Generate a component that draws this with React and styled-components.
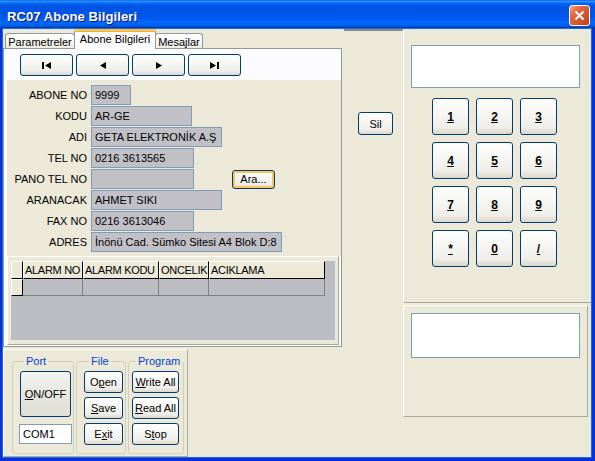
import React from "react";
import styled, { createGlobalStyle, css } from "styled-components";

const GlobalStyle = createGlobalStyle`
  html, body {
    margin: 0;
    padding: 0;
    background: #ece9d8;
  }
  body {
    font-family: "Liberation Sans", Arial, sans-serif;
    font-size: 11px;
    color: #000;
  }
  * {
    box-sizing: border-box;
  }
`;

const Window = styled.div`
  width: 595px;
  height: 461px;
  display: flex;
  flex-direction: column;
  background: #0831d9;
  overflow: hidden;
`;

const TitleBar = styled.div`
  height: 29px;
  flex: none;
  display: flex;
  align-items: center;
  justify-content: space-between;
  padding: 0 5px 0 7px;
  background: linear-gradient(
    180deg,
    #0058ee 0%,
    #3593ff 4%,
    #288eff 6%,
    #127dff 8%,
    #036ffc 10%,
    #0262ee 14%,
    #0057e5 20%,
    #0054e3 24%,
    #0055eb 56%,
    #005bf5 66%,
    #026afe 76%,
    #0062ef 86%,
    #0052d6 92%,
    #0040ab 94%,
    #003092 100%
  );
`;

const Title = styled.span`
  color: #fff;
  font-weight: bold;
  font-size: 13px;
  padding-top: 3px;
  text-shadow: 1px 1px #0a1883;
  letter-spacing: 0.1px;
`;

const CloseButton = styled.div`
  width: 21px;
  height: 21px;
  margin-top: 2px;
  border: 1px solid #fff;
  border-radius: 3px;
  background: linear-gradient(135deg, #f3a58f 0%, #e3683f 30%, #d2502b 70%, #c13c1a 100%);
  display: flex;
  align-items: center;
  justify-content: center;
`;

const Body = styled.div`
  flex: 1;
  display: flex;
  margin: 0 4px 4px 3px;
  background: #ece9d8;
  box-shadow: 0 0 0 1px #166aee;
`;

/* ---------- left column ---------- */

const LeftColumn = styled.div`
  width: 341px;
  flex: none;
  display: flex;
  flex-direction: column;
`;

const TabStrip = styled.div`
  height: 19px;
  display: flex;
  align-items: flex-end;
  padding-left: 2px;
`;

const Tab = styled.div`
  width: ${(p) => p.$w}px;
  height: 15px;
  display: flex;
  align-items: center;
  justify-content: center;
  padding-top: 1px;
  border: 1px solid #919b9c;
  border-bottom: none;
  border-radius: 3px 3px 0 0;
  background: linear-gradient(180deg, #ffffff 0%, #f7f7f4 50%, #ecebe6 100%);
  ${(p) =>
    p.$active &&
    css`
      height: 20px;
      margin-bottom: -1px;
      position: relative;
      z-index: 1;
      align-items: flex-start;
      padding-top: 2px;
      background: #fcfcfe;
      border-top: 2px solid #ffc83c;
      box-shadow: inset 0 1px 0 #f5b040;
      margin-left: -1px;
      margin-right: -1px;
    `}
`;

const TabPage = styled.div`
  width: 339px;
  height: 299px;
  border: 1px solid #919b9c;
  background: #fcfcfe;
  display: flex;
  flex-direction: column;
`;

const NavRow = styled.div`
  display: flex;
  gap: 3px;
  padding: 5px 0 0 16px;
`;

const XpButton = styled.button`
  font-family: inherit;
  font-size: ${(p) => p.$size || 11}px;
  font-weight: ${(p) => (p.$bold ? "bold" : "normal")};
  color: #000;
  width: ${(p) => p.$w}px;
  height: ${(p) => p.$h}px;
  flex: none;
  padding: 0;
  display: flex;
  align-items: center;
  justify-content: center;
  border: 1px solid #003c74;
  border-radius: 3px;
  background: linear-gradient(180deg, #ffffff 0%, #f5f5f1 45%, #efeee9 80%, #dcd7cc 100%);
  ${(p) =>
    p.$focus &&
    css`
      box-shadow: inset 0 0 0 2px #fbc35a;
    `}
  ${(p) =>
    p.$gray &&
    css`
      background: linear-gradient(180deg, #f4f4f0 0%, #e6e6df 50%, #dfdfd7 100%);
    `}
`;

const FieldsPanel = styled.div`
  margin: 4px 0 0 3px;
  height: 176px;
  background: #ece9d8;
  padding-top: 5px;
  display: flex;
  flex-direction: column;
  gap: 1px;
`;

const Row = styled.div`
  display: flex;
  align-items: center;
  height: 20px;
`;

const Label = styled.div`
  width: 81px;
  margin-right: 3px;
  text-align: right;
  padding-right: 1px;
  white-space: nowrap;
`;

const Field = styled.div`
  width: ${(p) => p.$w}px;
  height: 20px;
  border: 1px solid #7f9db9;
  background: #c0c0c6;
  padding-left: 3px;
  line-height: 18px;
  white-space: nowrap;
  overflow: hidden;
`;

const SearchButton = styled(XpButton)`
  margin-left: 38px;
`;

const GridPanel = styled.div`
  margin: 0 2px 0 3px;
  height: 89px;
  background: #ece9d8;
  border-top: 1px solid #fff;
  border-left: 1px solid #fff;
  border-right: 1px solid #aca899;
  border-bottom: 1px solid #aca899;
  padding: 4px 3px;
  display: flex;
`;

const GridArea = styled.div`
  flex: 1;
  background: #bdbdc4;
  display: flex;
  flex-direction: column;
`;

const GridRow = styled.div`
  display: flex;
  height: ${(p) => p.$h}px;
`;

const HeadCell = styled.div`
  width: ${(p) => p.$w}px;
  height: 100%;
  background: #ece9d8;
  border-top: 1px solid #fff;
  border-left: 1px solid #fff;
  border-right: 1px solid #000;
  border-bottom: 1px solid #000;
  padding-left: 1px;
  line-height: 16px;
  letter-spacing: -0.3px;
  white-space: nowrap;
  overflow: hidden;
`;

const DataCell = styled.div`
  width: ${(p) => p.$w}px;
  height: 100%;
  border-right: 1px solid #808080;
  border-bottom: 1px solid #808080;
`;

const BottomPanel = styled.div`
  margin-top: 2px;
  width: 185px;
  height: 108px;
  border-top: 1px solid #fff;
  border-left: 1px solid #fff;
  border-right: 1px solid #aca899;
  border-bottom: 1px solid #aca899;
  padding: 5px 0 0 8px;
  display: flex;
  gap: 2px;
`;

const Group = styled.fieldset`
  width: ${(p) => p.$w}px;
  height: 99px;
  margin: 0;
  padding: 3px 0 0 ${(p) => p.$pl}px;
  border: 1px solid #d0d0bf;
  border-radius: 3px;
  display: flex;
  flex-direction: column;
  gap: 4px;
  min-width: 0;
`;

const Legend = styled.legend`
  color: #0046d5;
  font-size: 11px;
  line-height: 13px;
  padding: 0 2px;
  margin-left: ${(p) => p.$ml}px;
`;

const TextBox = styled.div`
  width: 53px;
  height: 20px;
  margin: 3px 0 0 -1px;
  border: 1px solid #7f9db9;
  background: #fff;
  padding-left: 3px;
  line-height: 18px;
`;

/* ---------- middle column ---------- */

const MiddleColumn = styled.div`
  width: 59px;
  flex: none;
  border-top: 2px solid #8f8d83;
  padding: 81px 0 0 14px;
`;

/* ---------- right column ---------- */

const RightColumn = styled.div`
  flex: 1;
  display: flex;
  flex-direction: column;
`;

const TopSection = styled.div`
  height: 274px;
  border-left: 1px solid #fff;
  border-bottom: 1px solid #aca899;
  padding: 16px 0 0 7px;
`;

const Display = styled.div`
  width: 169px;
  height: ${(p) => p.$h}px;
  border: 1px solid #7f9db9;
  background: #fff;
`;

const Keypad = styled.div`
  margin: 10px 0 0 21px;
  display: grid;
  grid-template-columns: repeat(3, 37px);
  gap: 7px;
`;

const BottomSection = styled.div`
  margin-top: 2px;
  width: 185px;
  height: 112px;
  border-top: 1px solid #fff;
  border-left: 1px solid #fff;
  border-right: 1px solid #aca899;
  border-bottom: 1px solid #aca899;
  padding: 7px;
`;

const NavIcon = ({ kind }) => {
  if (kind === "first")
    return (
      <svg width="9" height="7" viewBox="0 0 9 7">
        <rect x="0" y="0" width="2" height="7" fill="#000" />
        <polygon points="9,0 3,3.5 9,7" fill="#000" />
      </svg>
    );
  if (kind === "prev")
    return (
      <svg width="6" height="7" viewBox="0 0 6 7">
        <polygon points="6,0 0,3.5 6,7" fill="#000" />
      </svg>
    );
  if (kind === "next")
    return (
      <svg width="6" height="7" viewBox="0 0 6 7">
        <polygon points="0,0 6,3.5 0,7" fill="#000" />
      </svg>
    );
  return (
    <svg width="9" height="7" viewBox="0 0 9 7">
      <polygon points="0,0 6,3.5 0,7" fill="#000" />
      <rect x="7" y="0" width="2" height="7" fill="#000" />
    </svg>
  );
};

const fields = [
  { label: "ABONE NO", value: "9999", w: 40 },
  { label: "KODU", value: "AR-GE", w: 101 },
  { label: "ADI", value: "GETA ELEKTRONİK A.Ş", w: 131 },
  { label: "TEL NO", value: "0216 3613565", w: 103 },
  { label: "PANO TEL NO", value: "", w: 103, search: true },
  { label: "ARANACAK", value: "AHMET SIKI", w: 131 },
  { label: "FAX NO", value: "0216 3613046", w: 103 },
  { label: "ADRES", value: "İnönü Cad. Sümko Sitesi A4 Blok D:8", w: 191 },
];

const columns = [
  { title: "ALARM NO", w: 60 },
  { title: "ALARM KODU", w: 76 },
  { title: "ONCELIK", w: 50 },
  { title: "ACIKLAMA", w: 116 },
];

const keys = ["1", "2", "3", "4", "5", "6", "7", "8", "9", "*", "0", "/"];

export default function App() {
  return (
    <>
      <GlobalStyle />
      <Window>
        <TitleBar>
          <Title>RC07 Abone Bilgileri</Title>
          <CloseButton>
            <svg width="11" height="11" viewBox="0 0 11 11">
              <path d="M1.5 1.5 L9.5 9.5 M9.5 1.5 L1.5 9.5" stroke="#fff" strokeWidth="2" />
            </svg>
          </CloseButton>
        </TitleBar>
        <Body>
          <LeftColumn>
            <TabStrip>
              <Tab $w={70}>Parametreler</Tab>
              <Tab $w={82} $active>
                Abone Bilgileri
              </Tab>
              <Tab $w={48}>Mesajlar</Tab>
            </TabStrip>
            <TabPage>
              <NavRow>
                {["first", "prev", "next", "last"].map((k) => (
                  <XpButton key={k} $w={53} $h={22}>
                    <NavIcon kind={k} />
                  </XpButton>
                ))}
              </NavRow>
              <FieldsPanel>
                {fields.map((f) => (
                  <Row key={f.label}>
                    <Label>{f.label}</Label>
                    <Field $w={f.w}>{f.value}</Field>
                    {f.search && (
                      <SearchButton $w={43} $h={19} $focus>
                        Ara...
                      </SearchButton>
                    )}
                  </Row>
                ))}
              </FieldsPanel>
              <GridPanel>
                <GridArea>
                  <GridRow $h={18}>
                    <HeadCell $w={12} />
                    {columns.map((c) => (
                      <HeadCell key={c.title} $w={c.w}>
                        {c.title}
                      </HeadCell>
                    ))}
                  </GridRow>
                  <GridRow $h={17}>
                    <HeadCell $w={12} />
                    {columns.map((c) => (
                      <DataCell key={c.title} $w={c.w} />
                    ))}
                  </GridRow>
                </GridArea>
              </GridPanel>
            </TabPage>
            <BottomPanel>
              <Group $w={62} $pl={7}>
                <Legend $ml={4}>Port</Legend>
                <XpButton $w={51} $h={46} $gray>
                  <span>
                    <u>O</u>N/OFF
                  </span>
                </XpButton>
                <TextBox>COM1</TextBox>
              </Group>
              <Group $w={50} $pl={7}>
                <Legend $ml={5}>File</Legend>
                <XpButton $w={39} $h={22}>
                  <span>
                    O<u>p</u>en
                  </span>
                </XpButton>
                <XpButton $w={39} $h={22}>
                  <span>
                    <u>S</u>ave
                  </span>
                </XpButton>
                <XpButton $w={39} $h={22}>
                  <span>
                    E<u>x</u>it
                  </span>
                </XpButton>
              </Group>
              <Group $w={56} $pl={3}>
                <Legend $ml={4}>Program</Legend>
                <XpButton $w={47} $h={22}>
                  <span>
                    <u>W</u>rite All
                  </span>
                </XpButton>
                <XpButton $w={47} $h={22}>
                  <span>
                    <u>R</u>ead All
                  </span>
                </XpButton>
                <XpButton $w={47} $h={22}>
                  <span>
                    S<u>t</u>op
                  </span>
                </XpButton>
              </Group>
            </BottomPanel>
          </LeftColumn>
          <MiddleColumn>
            <XpButton $w={35} $h={23}>
              Sil
            </XpButton>
          </MiddleColumn>
          <RightColumn>
            <TopSection>
              <Display $h={43} />
              <Keypad>
                {keys.map((k) => (
                  <XpButton key={k} $w={37} $h={37} $bold $size={12}>
                    <u>{k}</u>
                  </XpButton>
                ))}
              </Keypad>
            </TopSection>
            <BottomSection>
              <Display $h={45} />
            </BottomSection>
          </RightColumn>
        </Body>
      </Window>
    </>
  );
}
